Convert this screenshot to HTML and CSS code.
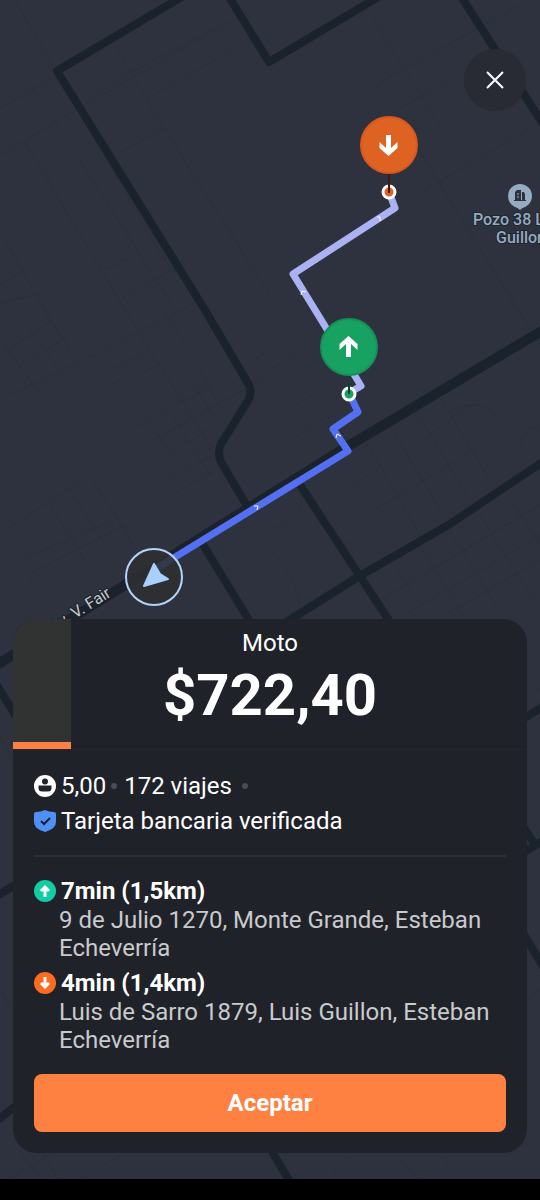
FILE: index.html
```html
<!DOCTYPE html>
<html lang="es">
<head>
  <meta charset="UTF-8">
  <meta name="viewport" content="width=device-width, initial-scale=1.0">
  <title>Solicitud de viaje</title>
  <link rel="stylesheet" href="styles.css">
</head>
<body>
  <div class="screen">
    <svg class="map" viewBox="0 0 540 1179" preserveAspectRatio="xMidYMax slice" role="img" aria-label="Mapa del viaje">
      <!-- Minor streets -->
      <g class="streets">
        <path d="M15 0 L58 75 L165 260 L210 310"/>
        <path d="M0 40 L80 160 L175 310"/>
        <path d="M0 108 L57 76"/>
        <path d="M0 155 L85 105 L250 10"/>
        <path d="M25 142 L125 310"/>
        <path d="M115 45 L165 130 L270 295"/>
        <path d="M85 102 L130 73 L215 28"/>
        <path d="M145 100 L245 42"/>
        <path d="M115 155 L165 128"/>
        <path d="M5 240 L45 310 L70 351"/>
        <path d="M0 285 L30 266 M0 304 L45 292"/>
        <path d="M105 270 L152 246 M122 298 L190 260"/>
        <path d="M340 30 L400 120 L540 345"/>
        <path d="M372 17 L445 135"/>
        <path d="M380 82 L520 5"/>
        <path d="M400 108 L450 80"/>
        <path d="M420 193 L540 122"/>
        <path d="M0 340 L40 394 M20 315 L65 378 M45 310 L70 351"/>
        <path d="M10 395 L100 352 L200 300"/>
        <path d="M0 355 L50 322 M20 365 L60 342"/>
        <path d="M125 310 L200 430 L250 510"/>
        <path d="M165 312 L184 342 M110 370 L150 350 M108 385 L160 365"/>
        <path d="M135 428 L200 392 L270 350"/>
        <path d="M145 445 L270 375 M155 462 L225 420 M165 480 L220 452 M172 495 L215 470"/>
        <path d="M150 425 L180 465 M170 412 L210 475 M190 380 L212 414 M200 370 L216 400"/>
        <path d="M8 528 L90 476 L134 545 M20 560 L115 520 M27 575 L125 525 L132 545"/>
        <path d="M28 577 L45 604 M50 505 L85 560 M70 490 L105 545"/>
        <path d="M345 490 L415 445 L470 405 M375 510 L480 445"/>
        <path d="M365 440 L420 535 M390 425 L440 510 M415 410 L470 500 M440 398 L490 480"/>
        <path d="M450 412 Q480 395 500 418 M520 445 Q530 420 540 430"/>
        <path d="M270 370 L310 345 M270 420 L320 390 M275 450 L330 415"/>
        <path d="M380 600 L540 505 M400 618 L540 535 M440 618 L540 560"/>
        <path d="M390 560 L430 618 M420 545 L465 618 M450 530 L500 612 M480 515 L535 602 M510 498 L540 545"/>
        <path d="M270 530 Q300 520 302 500 M305 580 Q325 550 355 540 M270 550 Q300 580 300 610"/>
        <path d="M0 735 L13 760 M0 990 L13 1012 M527 700 L540 688 M527 1000 L540 990"/>
        <path d="M10 1179 L60 1148 M20 1150 L40 1179 M40 1150 L58 1179 M80 1179 L120 1155 M330 1179 L350 1155 M400 1160 L420 1179 M440 1155 L460 1179"/>
      </g>

      <!-- Main roads -->
      <g class="roads">
        <path d="M190 -8 L57 71 L205 310 L249 385 Q252 391 249 399 L221 444 Q217 452 221 462 L250 511"/>
        <path d="M226 -8 L269 62 L390 -10"/>
        <path d="M460 -5 L545 127"/>
        <path d="M202 543 L252 625"/>
        <path d="M300 485 L392 625"/>
        <path d="M280 626 L358 577 L450 524 L550 457"/>
        <path d="M-5 682 L20 723"/>
        <path d="M-5 897 L30 876"/>
        <path d="M-5 1122 L30 1095"/>
        <path d="M520 721 L545 705"/>
        <path d="M520 822 L534 843 M520 855 L545 839"/>
        <path d="M520 928 L545 970"/>
        <path d="M268 1145 L292 1185"/>
        <path class="avenue" d="M-5 666 L125 585 L345 448 L550 326"/>
      </g>

      <text class="street-name" transform="translate(54 632) rotate(-32)">Av. V. Fair</text>

      <!-- Point of interest -->
      <g class="poi">
        <circle cx="520" cy="196" r="12"/>
        <path d="M515 206 L520 210 L525 206z"/>
        <path class="poi-building" d="M514 201 V200 H515 V192 L517 190 H521 V200 H522 V192 H524 L525 194 V200 H526 V201z"/>
        <path class="poi-windows" d="M517 194 H519 M517 197 H519"/>
        <text x="473" y="225">Pozo 38 Luis</text>
        <text x="496" y="243">Guillon</text>
      </g>

      <!-- Trip route, then the route to the pickup -->
      <path class="route route-trip" d="M389 192 L395 208 L293 274 L328 331 L361 386 L349 393"/>
      <path class="route route-pickup" d="M349 393 L358 412 L333 429 L348 451 L154 570"/>
      <g class="chevrons">
        <path d="M377 217 L380 217 L380 221"/>
        <path d="M301 295 L302 291 L306 292"/>
        <path d="M254 506 L258 506 L257 510"/>
        <path d="M336 438 L337 434 L341 436"/>
      </g>

      <g class="driver">
        <circle cx="154" cy="577" r="28"/>
        <path d="M144 586 L154 564 L160 574 L168 579z"/>
      </g>

      <g class="pin pin-dropoff">
        <circle class="pin-spot" cx="389" cy="192" r="6"/>
        <path class="pin-stem" d="M389 172 V193"/>
        <circle class="pin-head" cx="389" cy="145" r="28"/>
        <path class="pin-arrow" d="M386 135 H391 V148 L397.500 142 V148 L388.500 156 L379.500 148 V142 L386 148z"/>
      </g>
      <g class="pin pin-pickup">
        <circle class="pin-spot" cx="349" cy="394" r="6"/>
        <path class="pin-stem" d="M349 373 V394"/>
        <circle class="pin-head" cx="349" cy="347" r="28"/>
        <path class="pin-arrow" d="M346 357 H351 V344 L357.500 350 V344 L348.500 336 L339.500 344 V350 L346 344z"/>
      </g>
    </svg>

    <button class="close" type="button" aria-label="Cerrar">
      <svg viewBox="0 0 20 20"><path d="M2 2 L18 18 M18 2 L2 18"/></svg>
    </button>

    <main class="offer">
      <header class="offer-header">
        <div class="timer"></div>
        <div class="fare">
          <p class="service">Moto</p>
          <h1 class="price">$722,40</h1>
        </div>
      </header>

      <div class="offer-body">
        <section class="rider">
          <p class="line">
            <svg class="icon" viewBox="0 0 22 22">
              <circle cx="11" cy="11" r="11" fill="#fff"/>
              <circle cx="11" cy="6.500" r="3" fill="#20222a"/>
              <path d="M4.500 10.500 H17.500 V13 Q17.500 16.500 14 16.500 H8 Q4.500 16.500 4.500 13z" fill="#20222a"/>
            </svg>
            <span>5,00</span>
            <span class="dot"></span>
            <span class="trips">172 viajes</span>
            <span class="dot dot-last"></span>
          </p>
          <p class="line">
            <svg class="icon" viewBox="0 0 22 22">
              <path d="M11 0 Q15 2 20 2 Q22 2 22 4 V12 Q22 19 11 22 Q0 19 0 12 V4 Q0 2 2 2 Q7 2 11 0z" fill="#4e8ff8"/>
              <path d="M7 11 L10 14 L16 8" fill="none" stroke="#20222a" stroke-width="2"/>
            </svg>
            <span>Tarjeta bancaria verificada</span>
          </p>
        </section>

        <section class="stops">
          <div class="stop">
            <h2 class="line">
              <svg class="icon" viewBox="0 0 22 22">
                <circle cx="11" cy="11" r="11" fill="#12cda4"/>
                <path d="M11 17 V7 M7 11 L11 7 L15 11" fill="none" stroke="#fff" stroke-width="3"/>
              </svg>
              <span>7min (1,5km)</span>
            </h2>
            <p class="address">9 de Julio 1270, Monte Grande, Esteban Echeverría</p>
          </div>
          <div class="stop">
            <h2 class="line">
              <svg class="icon" viewBox="0 0 22 22">
                <circle cx="11" cy="11" r="11" fill="#fb6b22"/>
                <path d="M11 5 V15 M7 11 L11 15 L15 11" fill="none" stroke="#fff" stroke-width="3"/>
              </svg>
              <span>4min (1,4km)</span>
            </h2>
            <p class="address">Luis de Sarro 1879, Luis Guillon, Esteban Echeverría</p>
          </div>
        </section>

        <button class="accept" type="button">Aceptar</button>
      </div>
    </main>

    <div class="system-bar"></div>
  </div>
</body>
</html>
```
FILE: styles.css
```css
* {
  box-sizing: border-box;
}

body {
  margin: 0;
  background-color: #000;
  color: #fff;
  font-family: Roboto, "Liberation Sans", sans-serif;
  font-size: 24px;
  line-height: 28px;
}

h1, h2, p {
  margin: 0;
}

.screen {
  position: relative;
  display: flex;
  flex-direction: column;
  justify-content: flex-end;
  min-height: 100vh;
}

/* Map */
.map {
  position: absolute;
  top: 0;
  left: 0;
  width: 100%;
  height: 100%;
  padding-bottom: 21px;
  background-color: #2d323e;
}

.streets path {
  fill: none;
  stroke: #2a303b;
  stroke-width: 1;
}

.roads path {
  fill: none;
  stroke: #1a232c;
  stroke-width: 8;
  stroke-linejoin: round;
}

.roads .avenue {
  stroke-width: 10;
}

.street-name {
  fill: #c4c8ce;
  stroke: #1b222b;
  stroke-width: 2;
  paint-order: stroke;
  font-size: 16px;
}

.poi {
  fill: #95abc2;
  font-size: 16px;
  font-weight: 500;
}

.poi text {
  stroke: #20262f;
  stroke-width: 2;
  paint-order: stroke;
}

.poi .poi-building {
  fill: #2d323e;
}

.poi-windows {
  stroke: #95abc2;
}

.route {
  fill: none;
  stroke-width: 7;
  stroke-linejoin: round;
}

.route-trip {
  stroke: #aab2f4;
}

.route-pickup {
  stroke: #5470f2;
}

.chevrons path {
  fill: none;
  stroke: #fff;
  stroke-width: 1;
}

.driver circle {
  fill: rgba(47, 47, 49, 0.85);
  stroke: #b3d4fb;
  stroke-width: 2;
}

.driver path {
  fill: #a9d0fc;
  stroke: #a9d0fc;
  stroke-width: 2;
  stroke-linejoin: round;
}

.pin-spot {
  stroke: #fff;
  stroke-width: 3;
}

.pin-stem {
  stroke-width: 2;
}

.pin-head {
  stroke-width: 2;
}

.pin-arrow {
  fill: #fff;
}

.pin-dropoff circle {
  fill: #de6222;
}

.pin-dropoff .pin-head {
  stroke: #d9571f;
}

.pin-dropoff .pin-stem {
  stroke: #43190f;
}

.pin-pickup circle {
  fill: #17a262;
}

.pin-pickup .pin-head {
  stroke: #159157;
}

.pin-pickup .pin-stem {
  stroke: #0a4636;
}

.close {
  position: absolute;
  top: 49px;
  right: 14px;
  display: flex;
  align-items: center;
  justify-content: center;
  width: 62px;
  height: 62px;
  padding: 0;
  border: 0;
  border-radius: 50%;
  background-color: #282a34;
  cursor: pointer;
}

.close svg {
  width: 20px;
  height: 20px;
  fill: none;
  stroke: #fff;
  stroke-width: 2;
}

/* Trip offer card */
.offer {
  position: relative;
  margin: 0 13px 26px;
  border-radius: 24px;
  background-color: #20222a;
  overflow: hidden;
}

.offer-header {
  position: relative;
  border-bottom: 1px solid #23262e;
}

.timer {
  position: absolute;
  top: 0;
  bottom: 0;
  left: 0;
  width: 58px;
  border-bottom: 7px solid #ff8142;
  background-color: #313232;
}

.fare {
  padding: 10px 0 16px;
  text-align: center;
}

.price {
  font-size: 58px;
  font-weight: 700;
  line-height: 76px;
}

.offer-body {
  padding: 22px 21px 21px;
}

.rider {
  display: flex;
  flex-direction: column;
  gap: 7px;
  padding-bottom: 20px;
  border-bottom: 2px solid #2b2d35;
}

.line {
  display: flex;
  align-items: center;
  gap: 5px;
  font-size: 24px;
}

.icon {
  flex: none;
  width: 22px;
  height: 22px;
}

.dot {
  width: 6px;
  height: 6px;
  border-radius: 50%;
  background-color: #4b4d54;
}

.trips {
  margin-left: 2px;
}

.dot-last {
  margin-left: 5px;
}

.stops {
  display: flex;
  flex-direction: column;
  gap: 7px;
  padding: 20px 0;
}

.stop .line {
  font-weight: 700;
}

.address {
  padding: 1px 0 0 25px;
  color: #c9cacc;
}

.accept {
  display: block;
  width: 100%;
  padding: 15px;
  border: 0;
  border-radius: 8px;
  background-color: #ff8142;
  color: #fff;
  font: inherit;
  font-weight: 700;
  cursor: pointer;
}

.system-bar {
  position: relative;
  height: 21px;
  background-color: #000;
}
```
